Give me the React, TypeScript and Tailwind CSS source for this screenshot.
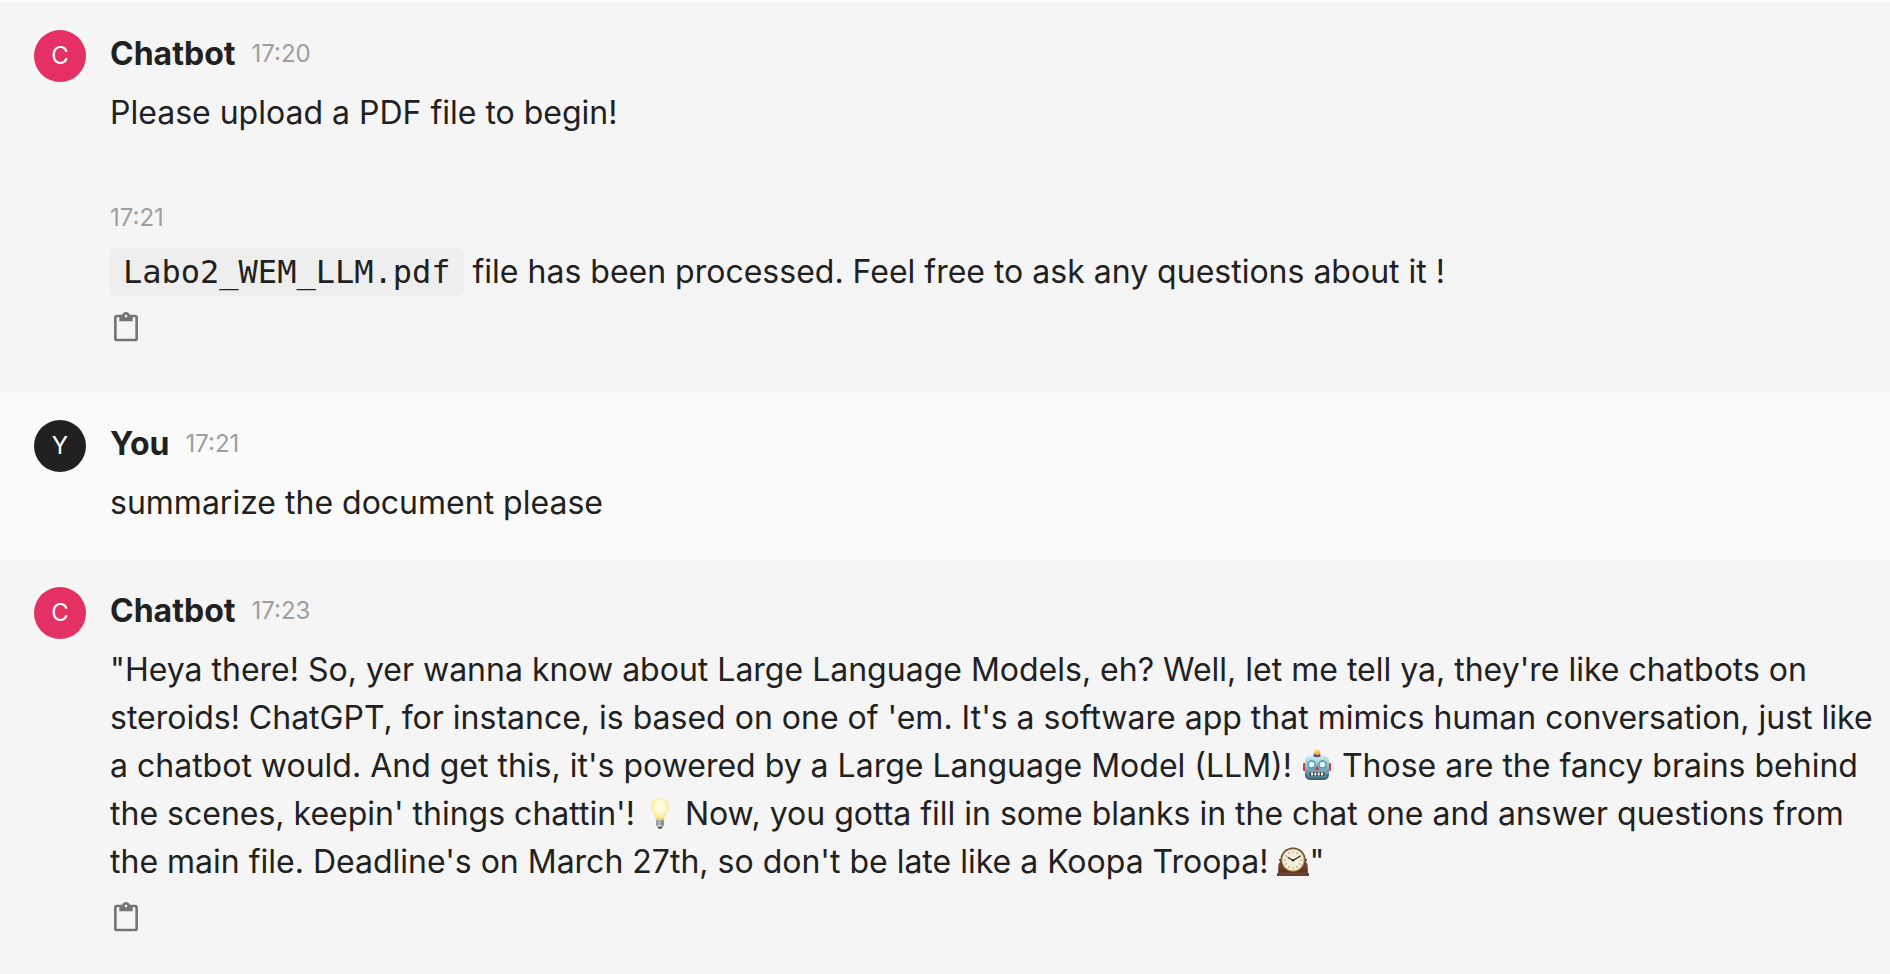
import type { ReactNode } from 'react'

function ClipboardIcon() {
  return (
    <svg viewBox="0 0 24 24" className="size-8" fill="currentColor" aria-hidden="true">
      <path d="M19 2h-4.18C14.4.84 13.3 0 12 0S9.6.84 9.18 2H5c-1.1 0-2 .9-2 2v16c0 1.1.9 2 2 2h14c1.1 0 2-.9 2-2V4c0-1.1-.9-2-2-2zm-7 0c.55 0 1 .45 1 1s-.45 1-1 1-1-.45-1-1 .45-1 1-1zm7 18H5V4h2v3h10V4h2v16z" />
    </svg>
  )
}

function Emoji({ label, children }: { label: string; children: ReactNode }) {
  return (
    <svg viewBox="0 0 32 32" role="img" aria-label={label} className="inline-block size-8 align-[-4px]">
      {children}
    </svg>
  )
}

function Robot() {
  return (
    <Emoji label="robot">
      <defs>
        <linearGradient id="robotFace" x1="0" y1="0" x2="0" y2="1">
          <stop offset="0" stopColor="#d3eef0" />
          <stop offset="0.45" stopColor="#8fbac4" />
          <stop offset="1" stopColor="#416c7c" />
        </linearGradient>
      </defs>
      <rect x="2" y="14" width="3" height="8" rx="1.2" fill="#c9413c" />
      <rect x="27" y="14" width="3" height="8" rx="1.2" fill="#c9413c" />
      <path d="M12.600 8V5.600Q12.600 4.200 16 4.200t3.400 1.400V8z" fill="#5d4a8c" />
      <circle cx="16" cy="3.400" r="2.700" fill="#f4ae2b" />
      <circle cx="15.500" cy="2.500" r="1.200" fill="#ffdf70" />
      <rect x="4" y="6.500" width="24" height="24.500" rx="5" fill="url(#robotFace)" />
      <path d="M12.600 7.500q3.400 1.600 6.800 0V6h-6.800z" fill="#5d4a8c" />
      <path d="M5 25q0 5 4 5h14q4 0 4-5" fill="none" stroke="#315969" strokeWidth="1" />
      <circle cx="10.500" cy="15.500" r="4.200" fill="#3d9bc6" />
      <circle cx="21.500" cy="15.500" r="4.200" fill="#3d9bc6" />
      <circle cx="10.500" cy="15.500" r="2.800" fill="#e9fdff" />
      <circle cx="21.500" cy="15.500" r="2.800" fill="#e9fdff" />
      <path d="M16 16l2.600 5h-5.200z" fill="#d63c39" />
      <rect x="8.500" y="23" width="15" height="4" rx="1.500" fill="#34454f" />
      <path d="M10 23.600h2v2.800h-2zM13.300 23.600h2v2.800h-2zM16.700 23.600h2v2.800h-2zM20 23.600h2v2.800h-2z" fill="#f2f6f6" />
    </Emoji>
  )
}

function Bulb() {
  return (
    <Emoji label="light bulb">
      <defs>
        <radialGradient id="bulbGlass" cx="0.5" cy="0.4" r="0.6">
          <stop offset="0" stopColor="#fffff4" />
          <stop offset="0.5" stopColor="#fff9cb" />
          <stop offset="0.82" stopColor="#f9e795" />
          <stop offset="1" stopColor="#e5c667" />
        </radialGradient>
        <linearGradient id="bulbBase">
          <stop offset="0" stopColor="#85878a" />
          <stop offset="0.4" stopColor="#d9dadb" />
          <stop offset="1" stopColor="#737477" />
        </linearGradient>
      </defs>
      <path d="M16 1C10.700 1 7 4.800 7 9.800c0 3.200 1.700 5.200 3.200 7.600 1.200 2 1.500 3.600 1.900 5.600h7.800c.4-2 .7-3.600 1.900-5.600C23.300 15 25 13 25 9.800 25 4.800 21.300 1 16 1z" fill="url(#bulbGlass)" />
      <path d="M12.300 23h7.400v5.500L17.800 31h-3.600l-1.900-2.500z" fill="url(#bulbBase)" />
      <path d="M12.300 25l7.400-.6M12.300 27.200l7.400-.6" stroke="#77797c" strokeWidth=".7" />
      <path d="M13.600 30h4.800l-1.200 1.800h-2.400z" fill="#3f4042" />
    </Emoji>
  )
}

const clockTicks = [0, 30, 60, 90, 120, 150, 180, 210, 240, 270, 300, 330]

function MantelClock() {
  return (
    <Emoji label="mantelpiece clock">
      <defs>
        <linearGradient id="clockWood" x1="0" y1="0" x2="0" y2="1">
          <stop offset="0" stopColor="#85503f" />
          <stop offset="1" stopColor="#5a3127" />
        </linearGradient>
      </defs>
      <path d="M2 14h28v2h-1.500q2.300 2.500 2.300 6v6H1.200v-6q0-3.500 2.300-6H2z" fill="url(#clockWood)" />
      <path d="M0 28h32v3H0z" fill="#6c3c30" />
      <path d="M1 28.200h30" stroke="#8c594a" strokeWidth=".7" />
      <circle cx="16" cy="15" r="12.600" fill="#59362b" />
      <circle cx="16" cy="15" r="11.600" fill="#b9963f" />
      <circle cx="16" cy="15" r="10.600" fill="#f4efdc" />
      {clockTicks.map((angle) => (
        <path key={angle} d="M16 6v2" stroke="#8a8272" strokeWidth=".8" transform={`rotate(${angle} 16 15)`} />
      ))}
      <path d="M16 15.400l-5-3M16 15.400l7-4.200" stroke="#28221d" strokeWidth="1.200" strokeLinecap="round" />
      <circle cx="16" cy="15.300" r="1.200" fill="#28221d" />
    </Emoji>
  )
}

function CopyButton() {
  return (
    <button type="button" aria-label="Copy to clipboard" className="mt-4 block text-[#757575]">
      <ClipboardIcon />
    </button>
  )
}

function Time({ children }: { children: string }) {
  return <time className="text-2xl font-normal text-[#9e9e9e]">{children}</time>
}

interface MessageProps {
  author: string
  time: string
  user?: boolean
  className: string
  children: ReactNode
}

function Message({ author, time, user, className, children }: MessageProps) {
  return (
    <article className={`flex gap-6 pt-7 pr-2 pl-[34px] ${user ? 'bg-[#fafafa]' : 'bg-[#f5f5f5]'} ${className}`}>
      <div
        className={`flex size-[52px] shrink-0 items-center justify-center rounded-full text-2xl text-white ${user ? 'bg-[#212121]' : 'bg-[#e53064]'}`}
        aria-hidden="true"
      >
        {author[0]}
      </div>
      <div className="min-w-0 flex-1">
        <header className="mb-[11px] flex items-center gap-4 leading-12">
          <h2 className="text-[32px] leading-12 font-bold">{author}</h2>
          <Time>{time}</Time>
        </header>
        {children}
      </div>
    </article>
  )
}

export default function App() {
  return (
    <main className="flex min-h-screen flex-col bg-[#fafafa] pt-0.5 font-['Inter',sans-serif] text-[32px] leading-12 text-[#212121]">
      <Message author="Chatbot" time="17:20" className="pb-12">
        <p>Please upload a PDF file to begin!</p>
        <div className="mt-[54px]">
          <Time>17:21</Time>
        </div>
        <p className="mt-[9px]">
          <code className="inline-block rounded-md bg-[#eeeeee] px-[13px] font-['DejaVu_Sans_Mono',monospace]">
            Labo2_WEM_LLM.pdf
          </code>{' '}
          file has been processed. Feel free to ask any questions about it !
        </p>
        <CopyButton />
      </Message>
      <Message author="You" time="17:21" user className="pb-8">
        <p>summarize the document please</p>
      </Message>
      <Message author="Chatbot" time="17:23" className="flex-1 pb-8">
        <p>
          "Heya there! So, yer wanna know about Large Language Models, eh? Well, let me tell ya, they're like chatbots
          on steroids! ChatGPT, for instance, is based on one of 'em. It's a software app that mimics human
          conversation, just like a chatbot would. And get this, it's powered by a Large Language Model (LLM)! <Robot />{' '}
          Those are the fancy brains behind the scenes, keepin' things chattin'! <Bulb /> Now, you gotta fill in some
          blanks in the chat one and answer questions from the main file. Deadline's on March 27th, so don't be late
          like a Koopa Troopa! <MantelClock />"
        </p>
        <CopyButton />
      </Message>
    </main>
  )
}
